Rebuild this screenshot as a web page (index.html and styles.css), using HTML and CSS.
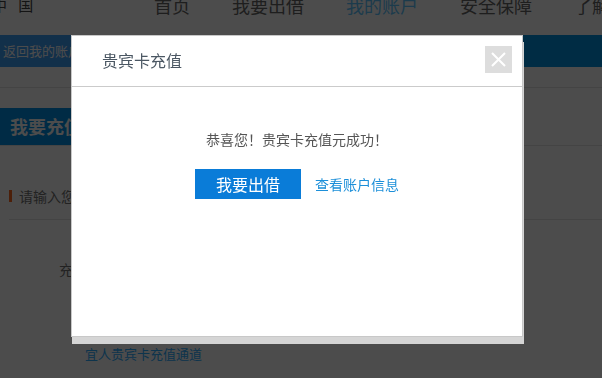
FILE: index.html
```html
<!DOCTYPE html>
<html lang="zh-CN">
<head>
    <meta charset="UTF-8">
    <meta name="viewport" content="width=device-width, initial-scale=1.0">
    <title>贵宾卡充值</title>
    <link rel="stylesheet" href="styles.css">
</head>
<body>
    <div class="page">
        <header class="topbar">
            <div class="logo">中 国</div>
            <nav class="nav">
                <a href="#">首页</a>
                <a href="#">我要出借</a>
                <a href="#" class="active">我的账户</a>
                <a href="#">安全保障</a>
                <a href="#">了解宜人贷</a>
            </nav>
        </header>

        <div class="crumb">
            <a href="#" class="back">返回我的账户</a>
        </div>
        <div class="subbar"></div>

        <div class="tabs">
            <span class="tab">我要充值</span>
        </div>

        <section class="form">
            <h3 class="form-title">请输入您的充值信息</h3>
            <div class="form-row">
                <label>充值金额</label>
            </div>
            <a href="#" class="card-link">宜人贵宾卡充值通道</a>
        </section>
    </div>

    <!-- dialog -->
    <div class="mask"></div>
    <div class="dialog">
        <div class="dialog-head">
            <h2 class="dialog-title">贵宾卡充值</h2>
            <a href="#" class="dialog-close">
                <svg width="15" height="15" viewBox="0 0 15 15">
                    <path d="M1 1 L14 14 M14 1 L1 14" stroke="#fff" stroke-width="2" fill="none"/>
                </svg>
            </a>
        </div>
        <div class="dialog-body">
            <p class="dialog-msg">恭喜您！贵宾卡充值元成功！</p>
            <div class="dialog-actions">
                <a href="#" class="btn">我要出借</a>
                <a href="#" class="link">查看账户信息</a>
            </div>
        </div>
    </div>
</body>
</html>
```

FILE: styles.css
```css
* {
    box-sizing: border-box;
    font-family: "Noto Sans CJK SC", "Liberation Sans", sans-serif;
}

body {
    margin: 0;
    background-color: #fff;
    overflow: hidden;
}

a {
    text-decoration: none;
}

/* page under the mask */
.topbar {
    height: 35px;
    display: flex;
    align-items: flex-start;
    overflow: hidden;
}

.logo {
    flex-shrink: 0;
    margin: -4px 0 0 -8px;
    width: 154px;
    font-size: 15px;
    line-height: 18px;
    letter-spacing: 4px;
    color: #444;
}

.nav {
    flex-shrink: 0;
    display: flex;
    gap: 42px;
    margin-top: -4px;
    margin-left: 8px;
}

.nav a {
    font-size: 18px;
    line-height: 18px;
    color: #666;
    white-space: nowrap;
}

.nav a.active {
    color: #5fc6ff;
}

.crumb {
    height: 32px;
    background-color: #0093e3;
    display: flex;
}

.back {
    background-color: #3fa0f7;
    color: #fff;
    font-size: 13px;
    line-height: 32px;
    padding: 0 14px 0 3px;
}

.subbar {
    height: 21px;
    border-bottom: 1px solid #e4e4e4;
}

.tabs {
    margin-top: 20px;
    border-bottom: 1px solid #e4e4e4;
    display: flex;
}

.tab {
    height: 37px;
    line-height: 37px;
    padding: 0 14px 0 10px;
    background-color: #0090e6;
    color: #fff;
    font-size: 18px;
    font-weight: bold;
}

.form {
    padding: 40px 0 0 9px;
}

.form-title {
    margin: 0;
    font-size: 14px;
    font-weight: normal;
    line-height: 20px;
    color: #737373;
    padding-bottom: 13px;
    border-bottom: 1px solid #e4e4e4;
    display: flex;
    align-items: center;
}

.form-title::before {
    content: "";
    width: 3px;
    height: 12px;
    background-color: #ff6a20;
    margin-right: 7px;
}

.form-row {
    margin-top: 39px;
    padding-left: 50px;
    font-size: 14px;
    line-height: 20px;
    color: #737373;
}

.card-link {
    display: inline-block;
    margin: 65px 0 0 76px;
    font-size: 13px;
    line-height: 20px;
    color: #2faeff;
}

/* dialog */
.mask {
    position: fixed;
    inset: 0;
    background-color: rgba(0, 0, 0, 0.7);
}

.dialog {
    position: fixed;
    left: 71px;
    top: 35px;
    width: 452px;
    background-color: #fff;
    border: 1px solid #c8c8c8;
    box-shadow: 1px 7px 0 #d5d5d5;
}

.dialog-head {
    height: 51px;
    border-bottom: 1px solid #cbcbcb;
    display: flex;
    justify-content: space-between;
    align-items: flex-start;
    padding: 0 10px 0 30px;
}

.dialog-title {
    margin: 14px 0 0;
    font-size: 16px;
    font-weight: normal;
    line-height: 20px;
    color: #4b5763;
}

.dialog-close {
    margin-top: 10px;
    width: 27px;
    height: 27px;
    background-color: #dddddd;
    display: flex;
    align-items: center;
    justify-content: center;
}

.dialog-body {
    height: 249px;
    padding-top: 42px;
    text-align: center;
}

.dialog-msg {
    margin: 0;
    font-size: 14px;
    line-height: 20px;
    color: #555;
}

.dialog-actions {
    margin-top: 20px;
    display: flex;
    justify-content: center;
    align-items: center;
    gap: 14px;
}

.btn {
    width: 106px;
    height: 30px;
    line-height: 30px;
    background-color: #0a7cd8;
    color: #fff;
    font-size: 16px;
}

.link {
    font-size: 14px;
    color: #1c8fd9;
}
```
